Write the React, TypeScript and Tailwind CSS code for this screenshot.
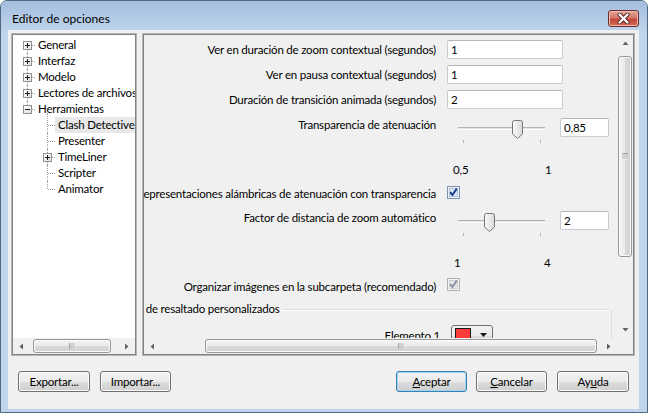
import React from "react";

type Dir = "left" | "right" | "up" | "down";

const ARROWS: Record<Dir, string> = {
  left: "M5 0.5L1.5 3.5L5 6.5Z",
  right: "M2 0.5L5.5 3.5L2 6.5Z",
  up: "M0.5 5L3.5 1.5L6.5 5Z",
  down: "M0.5 2L3.5 5.5L6.5 2Z",
};

function Arrow({ dir }: { dir: Dir }) {
  return (
    <svg width="7" height="7" viewBox="0 0 7 7">
      <path d={ARROWS[dir]} fill="#606060" />
    </svg>
  );
}

/* Barra de desplazamiento horizontal */
function HScroll({ left, width }: { left: number; width: number }) {
  return (
    <div className="flex h-[16px] w-full bg-[#f0f0f0]">
      <div className="grid w-[17px] shrink-0 place-items-center">
        <Arrow dir="left" />
      </div>
      <div className="relative min-w-0 flex-1">
        <div
          className="absolute top-[1px] flex h-[14px] items-center justify-center rounded-[3px] border border-[#979797] bg-[linear-gradient(to_bottom,#f5f5f5_0%,#e9e9e9_50%,#d9d9d9_51%,#d2d2d2_100%)] shadow-[inset_0_0_0_1px_#fbfbfb]"
          style={{ left, width }}
        >
          <svg width="7" height="6" viewBox="0 0 7 6">
            <path d="M1 0v6M3 0v6M5 0v6" stroke="#6b6b6b" strokeWidth="1" />
            <path d="M2 0v6M4 0v6M6 0v6" stroke="#fafafa" strokeWidth="1" />
          </svg>
        </div>
      </div>
      <div className="grid w-[17px] shrink-0 place-items-center">
        <Arrow dir="right" />
      </div>
    </div>
  );
}

function VScroll() {
  return (
    <div className="flex h-full w-[16px] shrink-0 flex-col bg-[#f0f0f0]">
      <div className="grid h-[17px] shrink-0 place-items-center">
        <Arrow dir="up" />
      </div>
      <div className="relative flex-1">
        <div className="absolute left-[1px] top-[4px] flex h-[201px] w-[14px] items-center justify-center rounded-[3px] border border-[#979797] bg-[linear-gradient(to_right,#f5f5f5_0%,#e9e9e9_50%,#d9d9d9_51%,#d2d2d2_100%)] shadow-[inset_0_0_0_1px_#fbfbfb]">
          <svg width="6" height="7" viewBox="0 0 6 7">
            <path d="M0 1h6M0 3h6M0 5h6" stroke="#6b6b6b" strokeWidth="1" />
            <path d="M0 2h6M0 4h6M0 6h6" stroke="#fafafa" strokeWidth="1" />
          </svg>
        </div>
      </div>
      <div className="grid h-[17px] shrink-0 place-items-center">
        <Arrow dir="down" />
      </div>
    </div>
  );
}

function ExpandBox({ open }: { open?: boolean }) {
  return (
    <div className="absolute left-[5px] top-[4px] grid h-[9px] w-[9px] place-items-center border border-[#919191] bg-gradient-to-br from-white to-[#dedede]">
      <svg width="7" height="7" viewBox="0 0 7 7">
        <path d="M1 3.5h5" stroke="#1e1e1e" />
        {!open && <path d="M3.5 1v5" stroke="#1e1e1e" />}
      </svg>
    </div>
  );
}

type TreeNode = {
  label: string;
  depth: 0 | 1;
  box?: "plus" | "minus";
  first?: boolean;
  last?: boolean;
  selected?: boolean;
};

const tree: TreeNode[] = [
  { label: "General", depth: 0, box: "plus", first: true },
  { label: "Interfaz", depth: 0, box: "plus" },
  { label: "Modelo", depth: 0, box: "plus" },
  { label: "Lectores de archivos", depth: 0, box: "plus" },
  { label: "Herramientas", depth: 0, box: "minus", last: true },
  { label: "Clash Detective", depth: 1, first: true, selected: true },
  { label: "Presenter", depth: 1 },
  { label: "TimeLiner", depth: 1, box: "plus" },
  { label: "Scripter", depth: 1 },
  { label: "Animator", depth: 1, last: true },
];

function TreeRow({ n }: { n: TreeNode }) {
  return (
    <div className={`flex h-[16px] items-center ${n.depth === 0 ? "pl-[5px]" : "pl-[25px]"}`}>
      <div className="relative h-[16px] w-[17px] shrink-0">
        <div
          className={`absolute left-[9px] border-l border-dotted border-[#a0a0a0] ${
            n.first ? (n.depth === 0 ? "top-[8px]" : "-top-[4px]") : "top-0"
          } ${n.last ? "bottom-[8px]" : "bottom-0"}`}
        />
        <div className="absolute left-[10px] top-[8px] w-[7px] border-t border-dotted border-[#a0a0a0]" />
        {n.box && <ExpandBox open={n.box === "minus"} />}
      </div>
      <span
        className={`flex h-[16px] items-center whitespace-nowrap pl-[3px] pr-[2px] ${
          n.selected ? "bg-[#e8e8e8]" : ""
        }`}
      >
        {n.label}
      </span>
    </div>
  );
}

function Field({ value, w }: { value: string; w: string }) {
  return (
    <div
      className={`flex h-[19px] ${w} items-center rounded-[2px] border border-[#c9cbd1] border-t-[#b5b7bd] bg-white pl-[3px]`}
    >
      {value}
    </div>
  );
}

function Label({ children, className = "" }: { children: React.ReactNode; className?: string }) {
  return (
    <div
      className={`flex w-[303px] shrink-0 items-center justify-end overflow-hidden whitespace-nowrap pr-[11px] ${className}`}
    >
      {children}
    </div>
  );
}

function Slider({ frac }: { frac: number }) {
  return (
    <div className="relative h-full w-[101px] shrink-0">
      <div className="absolute left-[11px] top-[12px] h-[3px] w-[87px] border-t border-b border-[#b3b3b3] border-b-[#ffffff] bg-[#e4e4e4]" />
      <div className="absolute left-[16px] top-[25px] h-[3px] w-px bg-[#b4b4b4]" />
      <div className="absolute left-[93px] top-[25px] h-[3px] w-px bg-[#b4b4b4]" />
      <svg
        className="absolute top-[5px]"
        style={{ left: 16 + frac * 77 - 5 }}
        width="11"
        height="19"
        viewBox="0 0 11 19"
      >
        <defs>
          <linearGradient id="thumbg" x1="0" x2="1" y1="0" y2="0">
            <stop offset="0" stopColor="#fbfbfb" />
            <stop offset="1" stopColor="#d9d9d9" />
          </linearGradient>
        </defs>
        <path
          d="M0.5 2.5Q0.5 0.5 2.5 0.5H8.5Q10.5 0.5 10.5 2.5V14L5.5 18.5L0.5 14Z"
          fill="url(#thumbg)"
          stroke="#757575"
        />
      </svg>
    </div>
  );
}

function Check({ disabled }: { disabled?: boolean }) {
  return (
    <svg width="13" height="13" viewBox="0 0 13 13">
      <rect x="0.5" y="0.5" width="12" height="12" fill="#f4f4f4" stroke={disabled ? "#b1b1b1" : "#7f93b0"} />
      <rect x="2.5" y="2.5" width="8" height="8" fill={disabled ? "#e6e6e6" : "#d6e4f4"} stroke={disabled ? "#cfcfcf" : "#a9c3e2"} />
      <path
        d="M3.2 6.2L5.4 9L9.8 2.6"
        fill="none"
        stroke={disabled ? "#8a93a6" : "#1f3a86"}
        strokeWidth="1.9"
      />
    </svg>
  );
}

function Button({
  children,
  w,
  primary,
}: {
  children: React.ReactNode;
  w: string;
  primary?: boolean;
}) {
  return (
    <div
      className={`flex h-[21px] ${w} items-center justify-center rounded-[3px] border bg-[linear-gradient(to_bottom,#f2f2f2_0%,#ebebeb_50%,#dddddd_51%,#cfcfcf_100%)] ${
        primary
          ? "border-[#3c7fb1] shadow-[inset_0_0_0_1px_#9cd6f4]"
          : "border-[#707070] shadow-[inset_0_0_0_1px_#fafafa]"
      }`}
    >
      {children}
    </div>
  );
}

export default function App() {
  return (
    <div className="flex h-[413px] w-[648px] flex-col overflow-hidden rounded-t-[7px] border border-[#52667f] bg-[#c0d5ec] font-['Lato',sans-serif] text-[11.5px] tracking-[-0.2px] text-black">
      {/* Barra de título */}
      <div className="flex h-[29px] shrink-0 items-center justify-between bg-gradient-to-b from-[#a3bedf] to-[#bed3eb] pl-[11px] pr-[8px] pt-[6px]">
        <span className="text-[12px] leading-[16px] tracking-normal">Editor de opciones</span>
        <div className="grid h-[17px] w-[31px] place-items-center rounded-[3px] border border-[#6d2b2b] bg-[linear-gradient(to_bottom,#e6a594_0%,#d5796a_45%,#c4463a_55%,#d26a55_100%)] shadow-[inset_0_0_0_1px_#eebbb0]">
          <svg width="13" height="11" viewBox="0 0 13 11">
            <path d="M2.5 1.5L10.5 9.5M10.5 1.5L2.5 9.5" stroke="#5a2323" strokeWidth="4" strokeLinecap="round" />
            <path d="M2.5 1.5L10.5 9.5M10.5 1.5L2.5 9.5" stroke="#ffffff" strokeWidth="2.2" strokeLinecap="round" />
          </svg>
        </div>
      </div>

      {/* Cuerpo */}
      <div className="mb-[3px] ml-[7px] mr-[8px] flex flex-1 flex-col bg-[#f0f0f0] pl-[3px] pr-[4px] pt-[3px]">
        <div className="flex h-[323px] gap-[5px]">
          {/* Árbol */}
          <div className="w-[126px] shrink-0 border border-[#b4b4b4]">
            <div className="flex h-full flex-col border border-[#828282] bg-white">
              <div className="h-[303px] overflow-hidden pt-[2px]">
                {tree.map((n) => (
                  <TreeRow key={n.label} n={n} />
                ))}
              </div>
              <HScroll left={3} width={78} />
            </div>
          </div>

          {/* Panel de opciones */}
          <div className="w-[493px] shrink-0 border border-[#b4b4b4]">
            <div className="flex h-full flex-col border border-[#828282]">
              <div className="flex h-[303px]">
                <div className="h-full w-[473px] overflow-hidden pt-[5px]">
                  <div className="flex h-[25px]">
                    <Label className="h-[19px]">Ver en duración de zoom contextual (segundos)</Label>
                    <Field value="1" w="w-[116px]" />
                  </div>
                  <div className="flex h-[25px]">
                    <Label className="h-[19px]">Ver en pausa contextual (segundos)</Label>
                    <Field value="1" w="w-[116px]" />
                  </div>
                  <div className="flex h-[25px]">
                    <Label className="h-[19px]">Duración de transición animada (segundos)</Label>
                    <Field value="2" w="w-[116px]" />
                  </div>

                  <div className="flex h-[45px]">
                    <Label className="h-[20px]">Transparencia de atenuación</Label>
                    <Slider frac={0.7} />
                    <div className="ml-[12px] mt-[3px]">
                      <Field value="0,85" w="w-[49px]" />
                    </div>
                  </div>
                  <div className="flex h-[20px] items-center pl-[309px]">
                    <span className="w-[92px]">0,5</span>
                    <span>1</span>
                  </div>
                  <div className="flex h-[28px]">
                    <Label className="mt-[4px] h-[20px]">
                      Representaciones alámbricas de atenuación con transparencia
                    </Label>
                    <div className="mt-[6px]">
                      <Check />
                    </div>
                  </div>

                  <div className="flex h-[45px]">
                    <Label className="h-[20px]">Factor de distancia de zoom automático</Label>
                    <Slider frac={1 / 3} />
                    <div className="ml-[12px] mt-[3px]">
                      <Field value="2" w="w-[49px]" />
                    </div>
                  </div>
                  <div className="flex h-[20px] items-center pl-[310px]">
                    <span className="w-[90px]">1</span>
                    <span>4</span>
                  </div>
                  <div className="flex h-[28px]">
                    <Label className="mt-[4px] h-[20px]">
                      Organizar imágenes en la subcarpeta (recomendado)
                    </Label>
                    <div className="mt-[5px]">
                      <Check disabled />
                    </div>
                  </div>

                  <fieldset className="-ml-[50px] min-w-0 w-[518px] rounded-[3px] border border-[#d5dfe5] pt-[8px] shadow-[inset_1px_1px_0_#ffffff]">
                    <legend className="ml-[9px] px-[2px] leading-[16px]">
                      Colores de resaltado personalizados
                    </legend>
                    <div className="flex h-[30px]">
                      <div className="flex h-[22px] w-[356px] items-center justify-end pr-[11px]">
                        Elemento 1
                      </div>
                      <div className="flex h-[22px] w-[42px] items-start rounded-[3px] border border-[#707070] bg-[linear-gradient(to_bottom,#f2f2f2_0%,#ebebeb_50%,#dddddd_51%,#cfcfcf_100%)] pl-[3px] pt-[2px]">
                        <div className="h-[15px] w-[16px] border border-[#1a1a1a] bg-[#ff3b3b]" />
                        <div className="ml-[9px] mt-[5px]">
                          <svg width="7" height="4" viewBox="0 0 7 4">
                            <path d="M0 0H7L3.5 4Z" fill="#1a1a1a" />
                          </svg>
                        </div>
                      </div>
                    </div>
                  </fieldset>
                </div>
                <VScroll />
              </div>
              <div className="flex h-[16px]">
                <div className="w-[473px]">
                  <HScroll left={44} width={392} />
                </div>
                <div className="w-[16px] bg-[#f0f0f0]" />
              </div>
            </div>
          </div>
        </div>

        {/* Botones */}
        <div className="mt-[15px] flex items-center justify-between pl-[7px] pr-[6px]">
          <div className="flex gap-[10px]">
            <Button w="w-[72px]">Exportar...</Button>
            <Button w="w-[71px]">Importar...</Button>
          </div>
          <div className="flex gap-[9px]">
            <Button w="w-[71px]" primary>
              <span>
                <span className="underline">A</span>ceptar
              </span>
            </Button>
            <Button w="w-[71px]">
              <span>
                <span className="underline">C</span>ancelar
              </span>
            </Button>
            <div className="ml-px">
              <Button w="w-[72px]">
                <span>
                  Ay<span className="underline">u</span>da
                </span>
              </Button>
            </div>
          </div>
        </div>
      </div>
    </div>
  );
}
